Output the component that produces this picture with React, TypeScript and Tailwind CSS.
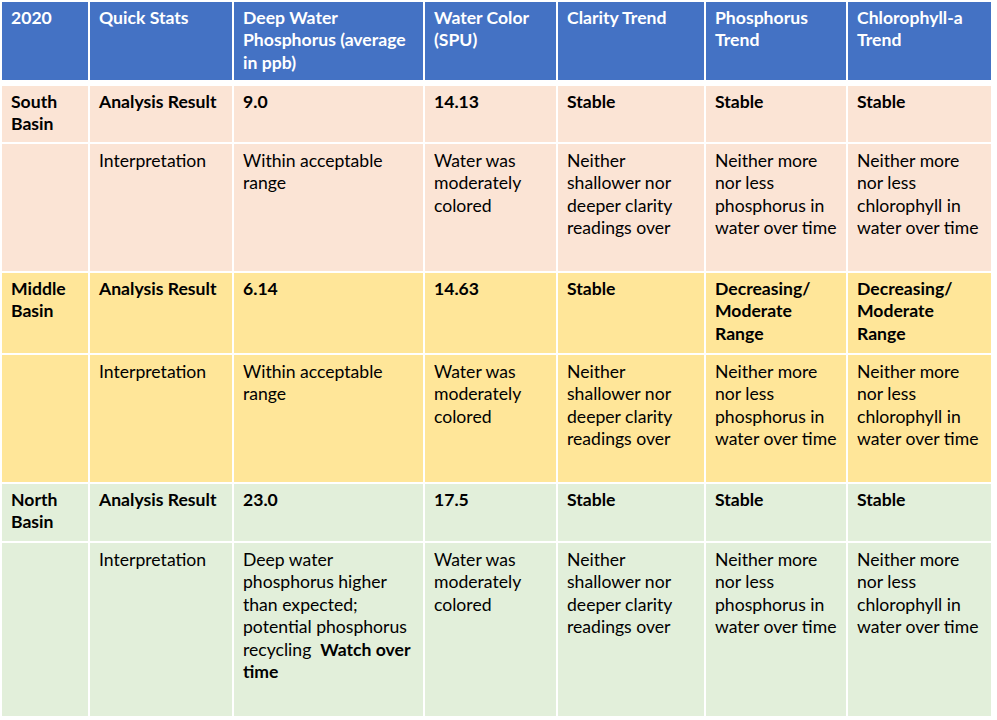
type Basin = {
  name: string[];
  bg: string;
  resultH: string;
  interpH: string;
  results: string[][];
  interp: string[][];
  watch?: boolean;
};

const cols = "grid grid-cols-[86px_142px_189px_131px_146px_140px_143px] gap-x-[2px]";

const header = [
  ["2020"],
  ["Quick Stats"],
  ["Deep Water", "Phosphorus (average", "in ppb)"],
  ["Water Color", "(SPU)"],
  ["Clarity Trend"],
  ["Phosphorus", "Trend"],
  ["Chlorophyll-a", "Trend"],
];

const interpCommon = [
  ["Water was", "moderately", "colored"],
  ["Neither", "shallower nor", "deeper clarity", "readings over"],
  ["Neither more", "nor less", "phosphorus in", "water over time"],
  ["Neither more", "nor less", "chlorophyll in", "water over time"],
];

const basins: Basin[] = [
  {
    name: ["South", "Basin"],
    bg: "bg-[#fbe4d5]",
    resultH: "h-[56px]",
    interpH: "h-[127px]",
    results: [["9.0"], ["14.13"], ["Stable"], ["Stable"], ["Stable"]],
    interp: [["Within acceptable", "range"], ...interpCommon],
  },
  {
    name: ["Middle", "Basin"],
    bg: "bg-[#ffe699]",
    resultH: "h-[80px]",
    interpH: "h-[127px]",
    results: [
      ["6.14"],
      ["14.63"],
      ["Stable"],
      ["Decreasing/", "Moderate", "Range"],
      ["Decreasing/", "Moderate", "Range"],
    ],
    interp: [["Within acceptable", "range"], ...interpCommon],
  },
  {
    name: ["North", "Basin"],
    bg: "bg-[#e2efda]",
    resultH: "h-[57px]",
    interpH: "h-[173px]",
    results: [["23.0"], ["17.5"], ["Stable"], ["Stable"], ["Stable"]],
    interp: [
      ["Deep water", "phosphorus higher", "than expected;", "potential phosphorus"],
      ...interpCommon,
    ],
    watch: true,
  },
];

function Lines({ lines }: { lines: string[] }) {
  return (
    <>
      {lines.map((l, i) => (
        <div key={i} className="whitespace-nowrap">
          {l}
        </div>
      ))}
    </>
  );
}

function Td({
  bg,
  bold,
  children,
}: {
  bg: string;
  bold?: boolean;
  children?: React.ReactNode;
}) {
  return (
    <div
      className={`${bg} ${bold ? "font-bold pt-[5px]" : "font-normal pt-[6px]"} overflow-hidden pl-[9px] text-black`}
    >
      {children}
    </div>
  );
}

export default function App() {
  return (
    <div className="w-[997px] h-[720px] bg-white p-[2px] font-['Lato','Open_Sans',sans-serif] text-[17.6px] leading-[22.4px]">
      {/* header */}
      <div className={`${cols} h-[78px] mb-[6px]`}>
        {header.map((h, i) => (
          <div key={i} className="bg-[#4472c4] pl-[9px] pt-[5px] font-bold text-white">
            <Lines lines={h} />
          </div>
        ))}
      </div>

      <div className="flex flex-col gap-y-[2px]">
        {basins.map((b) => (
          <div key={b.name[0]} className="flex flex-col gap-y-[2px]">
            {/* analysis result row */}
            <div className={`${cols} ${b.resultH}`}>
              <Td bg={b.bg} bold>
                <Lines lines={b.name} />
              </Td>
              <Td bg={b.bg} bold>
                <Lines lines={["Analysis Result"]} />
              </Td>
              {b.results.map((r, i) => (
                <Td key={i} bg={b.bg} bold>
                  <Lines lines={r} />
                </Td>
              ))}
            </div>

            {/* interpretation row */}
            <div className={`${cols} ${b.interpH}`}>
              <Td bg={b.bg} />
              <Td bg={b.bg}>
                <Lines lines={["Interpretation"]} />
              </Td>
              {b.interp.map((r, i) => (
                <Td key={i} bg={b.bg}>
                  <Lines lines={r} />
                  {b.watch && i === 0 && (
                    <>
                      <div className="whitespace-nowrap">
                        recycling&nbsp; <span className="font-bold">Watch over</span>
                      </div>
                      <div className="font-bold">time</div>
                    </>
                  )}
                </Td>
              ))}
            </div>
          </div>
        ))}
      </div>
    </div>
  );
}
